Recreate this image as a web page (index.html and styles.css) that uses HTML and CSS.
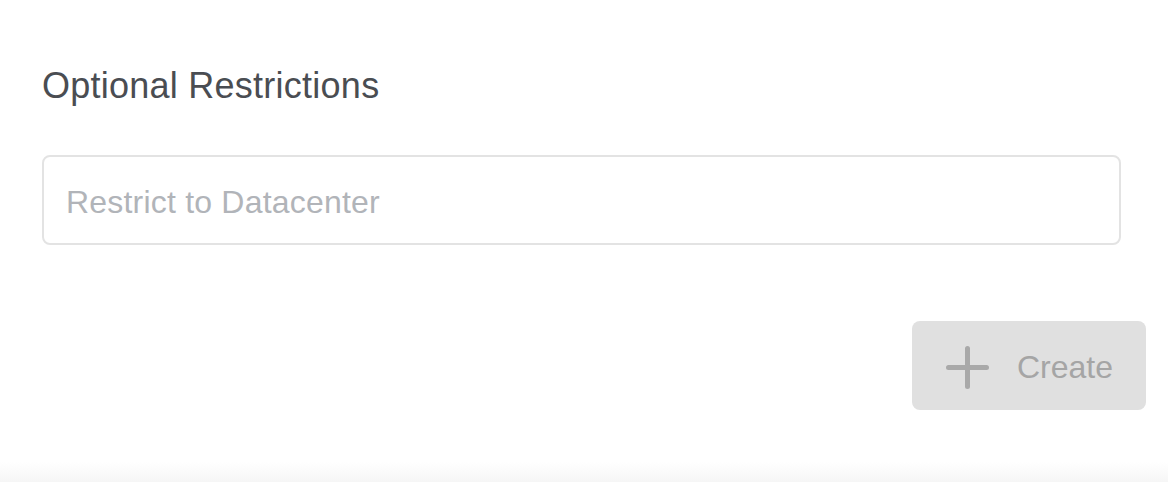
FILE: index.html
```html
<!DOCTYPE html>
<html lang="en">
<head>
  <meta charset="UTF-8">
  <title>Optional Restrictions</title>
  <link rel="stylesheet" href="styles.css">
</head>
<body>

<div class="panel">
  <h2 class="section-title">Optional Restrictions</h2>

  <div class="field-row">
    <input type="text" class="field" placeholder="Restrict to Datacenter" />
  </div>

  <div class="actions">
    <button class="btn-create" disabled>
      <svg class="btn-icon" width="43" height="43" viewBox="0 0 43 43">
        <path d="M21.5 2.5V40.5M2.5 21.5H40.5" stroke="currentColor" stroke-width="5" stroke-linecap="round" fill="none"/>
      </svg>
      <span>Create</span>
    </button>
  </div>
</div>

<div class="panel-foot"></div>

</body>
</html>
```

FILE: styles.css
```css
body { margin: 0; background: #fff; font-family: "Liberation Sans", Arial, sans-serif; }
.panel { padding: 65px 22px 0 42px; }
.section-title { margin: 0 0 48px; font-size: 36px; line-height: 42px; font-weight: normal; letter-spacing: 0.25px; color: #4a4d52; }
.field-row { padding-right: 25px; }
.field { display: block; box-sizing: border-box; width: 100%; height: 90px; padding: 4px 22px 0; border: 2px solid #e3e3e3; border-radius: 8px; font-family: inherit; font-size: 32px; letter-spacing: 0.2px; color: #4a4d52; outline: none; background: #fff; }
.field::placeholder { color: #b1b4b9; }
.actions { display: flex; justify-content: flex-end; margin-top: 76px; }
.btn-create { display: flex; align-items: center; gap: 28px; box-sizing: border-box; width: 234px; height: 89px; padding: 4px 0 0 34px; border: none; border-radius: 8px; background: #e0e0e0; color: #a5a5a5; font-family: inherit; font-size: 32px; cursor: default; }
.btn-icon { display: block; color: #a9a9a9; }
.panel-foot { margin-top: 52px; height: 20px; background: linear-gradient(#fff, #f6f6f6); }
```
